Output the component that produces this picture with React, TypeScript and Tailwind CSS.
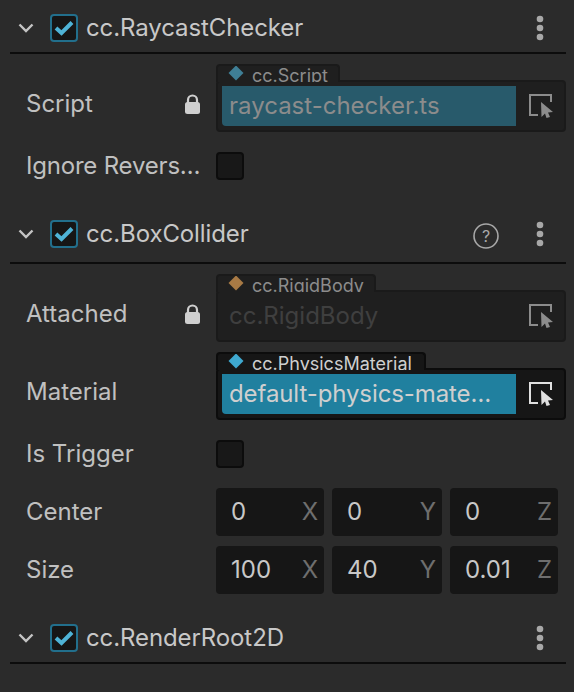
import React from "react";

function Chevron() {
  return (
    <svg width="16" height="10" viewBox="0 0 16 10" className="shrink-0">
      <path d="M1.5 1.5 L8 8 L14.5 1.5" fill="none" stroke="#c4c4c4" strokeWidth="2.4" />
    </svg>
  );
}

function Check() {
  return (
    <div className="w-[28px] h-[28px] shrink-0 rounded-[4px] border-2 border-[#226f8c] bg-[#161616] flex items-center justify-center">
      <svg width="20" height="16" viewBox="0 0 20 16">
        <path d="M2 8 L7.5 13 L18 2.5" fill="none" stroke="#4fb3d6" strokeWidth="4" />
      </svg>
    </div>
  );
}

function Kebab() {
  return (
    <svg width="8" height="26" viewBox="0 0 8 26" className="shrink-0">
      <circle cx="4" cy="4" r="3.3" fill="#a8a8a8" />
      <circle cx="4" cy="13" r="3.3" fill="#a8a8a8" />
      <circle cx="4" cy="22" r="3.3" fill="#a8a8a8" />
    </svg>
  );
}

function Header({ name, help, tall, className }: { name: string; help?: boolean; tall?: boolean; className?: string }) {
  return (
    <div className={`flex items-center pl-[8px] pr-[22px] border-b-2 border-[#0c0c0c] ${tall ? "pb-[14px]" : "pb-[10px]"} ${className ?? ""}`}>
      <Chevron />
      <div className="ml-[16px]">
        <Check />
      </div>
      <span className="ml-[8px] text-[24px] leading-[28px] tracking-[-0.1px] text-[#c8c8c8] whitespace-nowrap">{name}</span>
      {help && (
        <svg width="26" height="26" viewBox="0 0 26 26" className="ml-auto mr-[37px] mt-[2px] -mb-[2px] shrink-0">
          <circle cx="13" cy="13" r="12" fill="none" stroke="#a8a8a8" strokeWidth="1.6" />
          <text x="13" y="18.5" textAnchor="middle" fontSize="16" fill="#a8a8a8" fontFamily="Inter, sans-serif">?</text>
        </svg>
      )}
      <div className={help ? "" : "ml-auto"}>
        <Kebab />
      </div>
    </div>
  );
}

function Lock() {
  return (
    <svg width="15" height="20" viewBox="0 0 15 20" className="shrink-0">
      <path d="M3 9 V6 a4.5 4.5 0 0 1 9 0 V9" fill="none" stroke="#cfcfcf" strokeWidth="2.2" />
      <rect x="0" y="8" width="15" height="12" rx="2.5" fill="#cfcfcf" />
    </svg>
  );
}

function Picker({ color }: { color: string }) {
  return (
    <svg width="24" height="24" viewBox="0 0 24 24" className="shrink-0">
      <path d="M9 21 H1 V1 H22 V8" fill="none" stroke={color} strokeWidth="2" />
      <path d="M12 8 L24 18 L19 18.5 L21 23 L17.5 24 L16 19.5 L12.5 23 Z" fill={color} />
    </svg>
  );
}

function Row({ label, locked, field, tight, children, className }: { label: string; locked?: boolean; field?: boolean; tight?: boolean; children: React.ReactNode; className?: string }) {
  return (
    <div className={`flex items-center pl-[16px] ${className ?? ""}`}>
      <div className={`w-[190px] shrink-0 flex items-center justify-between pr-[16px] ${field ? "pt-[12px]" : ""}`}>
        <span className={`text-[24px] leading-[28px] text-[#c0c0c0] whitespace-nowrap ${tight ? "tracking-[-0.2px]" : ""}`}>{label}</span>
        {locked && <Lock />}
      </div>
      {children}
    </div>
  );
}

function Field({
  type,
  value,
  diamond,
  tabWidth,
  mode,
}: {
  type: string;
  value: string;
  diamond: string;
  tabWidth: string;
  mode: "muted" | "empty" | "active";
}) {
  const active = mode === "active";
  return (
    <div className="flex-1 flex flex-col">
      <div
        className={`relative z-10 h-[18px] overflow-hidden rounded-t-[4px] border-2 border-b-0 flex items-start pl-[10px] ${tabWidth} ${
          active ? "border-[#0c0c0c] bg-[#161616]" : "border-[#1a1a1a] bg-[#1f1f1f]"
        }`}
      >
        <svg width="16" height="16" viewBox="0 0 16 16" className="shrink-0 -mt-[1px]">
          <path d="M8 0.5 L15.5 8 L8 15.5 L0.5 8 Z" fill={diamond} />
        </svg>
        <span className={`ml-[8px] text-[18px] leading-[20px] whitespace-nowrap ${active ? "text-[#cfcfcf]" : "text-[#8c8c8c]"}`}>{type}</span>
      </div>
      <div
        className={`-mt-[2px] h-[52px] rounded-[4px] border-2 flex items-center pl-[4px] ${
          active ? "border-[#0c0c0c] bg-[#161616]" : "border-[#1a1a1a] bg-[#1f1f1f]"
        }`}
      >
        <div
          className={`w-[294px] h-[40px] rounded-bl-[4px] flex items-center pl-[7px] text-[24px] whitespace-nowrap ${
            mode === "muted" ? "bg-[#285a6b] text-[#8c8c8c]" : mode === "active" ? "bg-[#20809f] text-[#cfcfcf] tracking-[-0.1px]" : "text-[#3f3f3f]"
          }`}
        >
          {value}
        </div>
        <div className="ml-[13px]">
          <Picker color={active ? "#e0e0e0" : "#8c8c8c"} />
        </div>
      </div>
    </div>
  );
}

function Box() {
  return <div className="w-[28px] h-[28px] rounded-[4px] border-2 border-[#0c0c0c] bg-[#181818]" />;
}

function Num({ value, axis }: { value: string; axis: string }) {
  return (
    <div className="h-[48px] rounded-[4px] bg-[#161616] flex items-center justify-between pl-[15px] pr-[6px]">
      <span className="text-[24px] text-[#c8c8c8]">{value}</span>
      <span className="text-[24px] text-[#6e6e6e]">{axis}</span>
    </div>
  );
}

function Vec({ label, values, className }: { label: string; values: string[]; className?: string }) {
  return (
    <Row label={label} className={className}>
      <div className="flex-1 pr-[8px] grid grid-cols-[108px_110px_108px] gap-[8px]">
        <Num value={values[0]} axis="X" />
        <Num value={values[1]} axis="Y" />
        <Num value={values[2]} axis="Z" />
      </div>
    </Row>
  );
}

export default function App() {
  return (
    <div
      className="w-[574px] h-[692px] overflow-hidden bg-[#2b2b2b] pl-[10px] pr-[8px] pt-[14px]"
      style={{ fontFamily: "Inter, sans-serif" }}
    >
      <Header name="cc.RaycastChecker" />
      <Row label="Script" locked field className="mt-[10px]">
        <Field type="cc.Script" value="raycast-checker.ts" diamond="#3f7f96" tabWidth="w-[124px]" mode="muted" />
      </Row>
      <Row label="Ignore Revers…" tight className="mt-[20px]">
        <Box />
      </Row>
      <Header name="cc.BoxCollider" help tall className="mt-[40px]" />
      <Row label="Attached" locked field className="mt-[10px]">
        <Field type="cc.RigidBody" value="cc.RigidBody" diamond="#a87a45" tabWidth="w-[160px]" mode="empty" />
      </Row>
      <Row label="Material" field className="mt-[10px]">
        <Field type="cc.PhysicsMaterial" value="default-physics-mate…" diamond="#3fa9d0" tabWidth="w-[210px]" mode="active" />
      </Row>
      <Row label="Is Trigger" className="mt-[20px]">
        <Box />
      </Row>
      <Vec label="Center" values={["0", "0", "0"]} className="mt-[20px]" />
      <Vec label="Size" values={["100", "40", "0.01"]} className="mt-[10px]" />
      <Header name="cc.RenderRoot2D" className="mt-[30px]" />
    </div>
  );
}
